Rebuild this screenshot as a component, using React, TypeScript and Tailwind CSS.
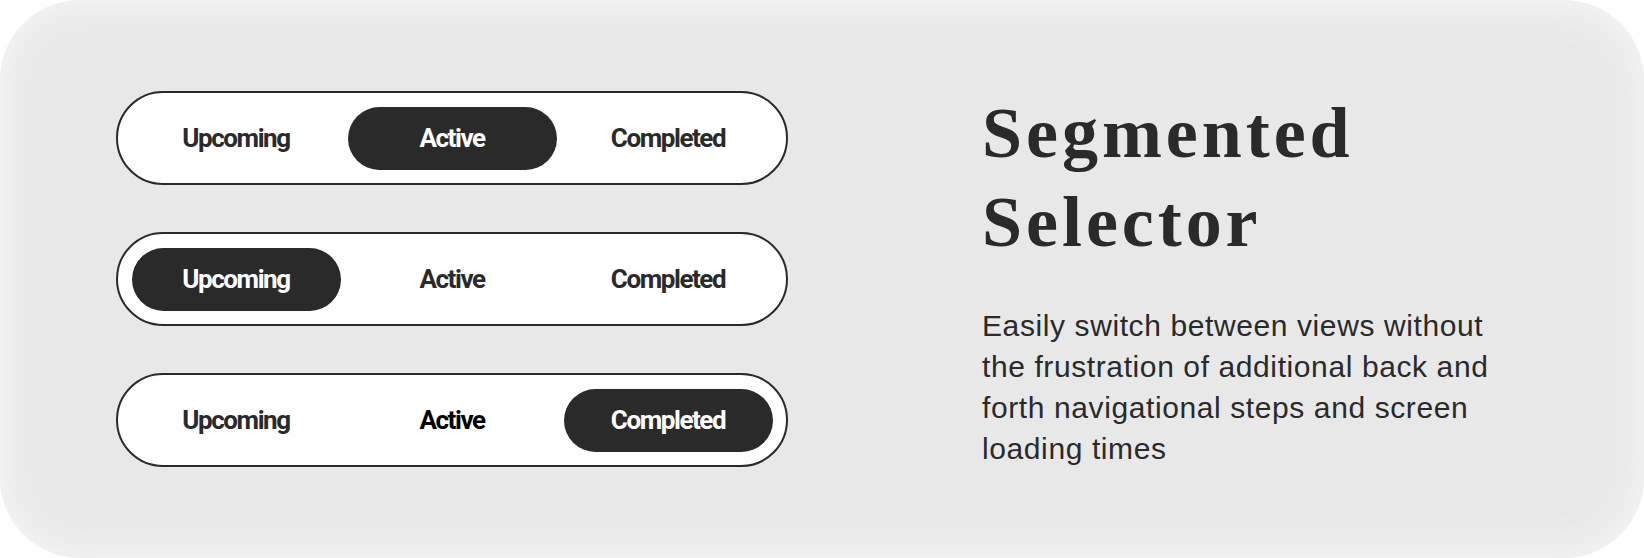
import { useState } from "react";

type Tab = "Upcoming" | "Active" | "Completed";

const tabs: Tab[] = ["Upcoming", "Active", "Completed"];

function SegmentedControl({ initial, strongInactive }: { initial: Tab; strongInactive?: Tab }) {
  const [active, setActive] = useState<Tab>(initial);

  return (
    <div className="grid h-[94px] grid-cols-3 gap-[7px] rounded-full border-2 border-[#2a2a2a] bg-white p-[13.5px]">
      {tabs.map((tab) => {
        const isActive = tab === active;
        return (
          <button
            key={tab}
            type="button"
            onClick={() => setActive(tab)}
            className={
              isActive
                ? "flex items-center justify-center rounded-full bg-[#2a2a2a] text-[26px] font-bold tracking-[-0.055em] text-white"
                : tab === strongInactive
                  ? "flex items-center justify-center rounded-full text-[26px] font-bold tracking-[-0.055em] text-black"
                  : "flex items-center justify-center rounded-full text-[26px] font-bold tracking-[-0.055em] text-[#2a2a2a]"
            }
            style={{ fontFamily: "Roboto, 'Liberation Sans', sans-serif" }}
          >
            {tab}
          </button>
        );
      })}
    </div>
  );
}

export default function App() {
  return (
    <div className="h-[558px] w-[1644px] bg-white">
      <div className="flex h-full items-center rounded-[80px] bg-[#e8e8e8] pl-[116px] shadow-[inset_0_0_50px_rgba(255,255,255,0.7)]">
        <div className="flex w-[672px] flex-col gap-[47px]">
          <SegmentedControl initial="Active" />
          <SegmentedControl initial="Upcoming" />
          <SegmentedControl initial="Completed" strongInactive="Active" />
        </div>

        <div className="ml-[194px] flex flex-col text-[#2a2a2a]">
          <h1
            className="text-[72px] font-bold leading-[89px] tracking-[0.055em]"
            style={{ fontFamily: "'Liberation Serif', serif" }}
          >
            Segmented
            <br />
            Selector
          </h1>
          <p
            className="mt-[38px] w-[512px] text-[30px] leading-[41px] tracking-[0.02em]"
            style={{ fontFamily: "'Liberation Sans', sans-serif" }}
          >
            Easily switch between views without the frustration of additional back and forth navigational steps and screen loading times
          </p>
        </div>
      </div>
    </div>
  );
}
